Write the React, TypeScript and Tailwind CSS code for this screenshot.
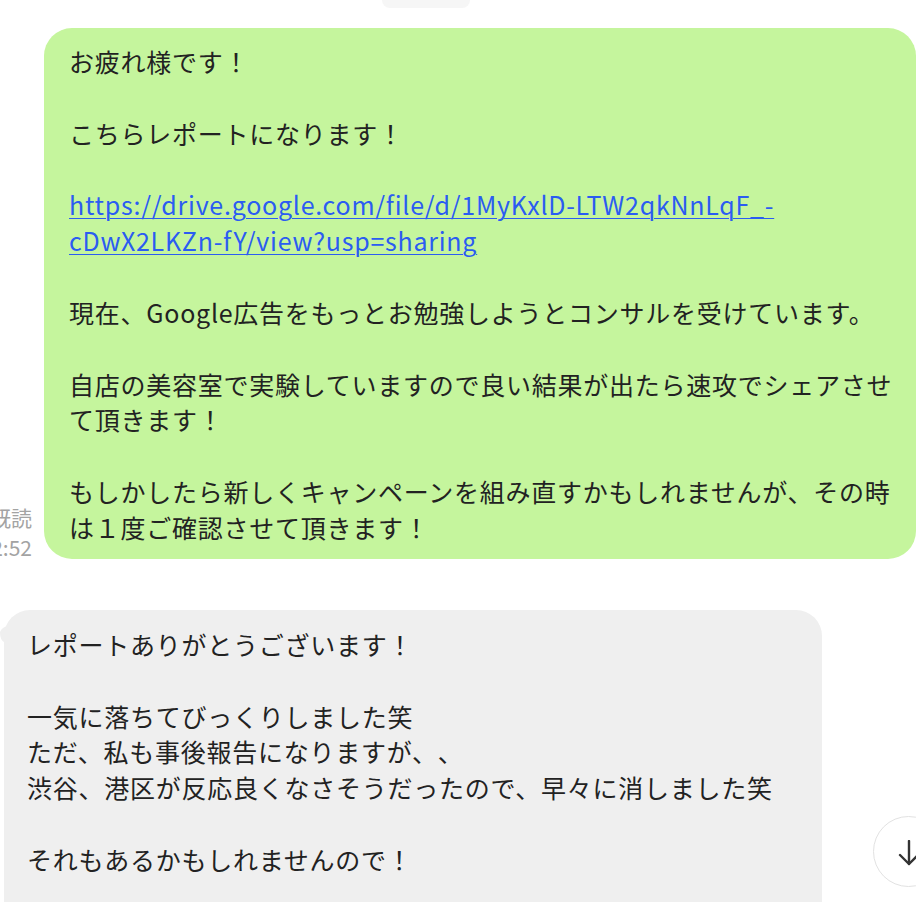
import React from "react";

const greenLines: (string | null | { link: string })[] = [
  "お疲れ様です！",
  null,
  "こちらレポートになります！",
  null,
  { link: "https://drive.google.com/file/d/1MyKxlD-LTW2qkNnLqF_-" },
  { link: "cDwX2LKZn-fY/view?usp=sharing" },
  null,
  "現在、Google広告をもっとお勉強しようとコンサルを受けています。",
  null,
  "自店の美容室で実験していますので良い結果が出たら速攻でシェアさせ",
  "て頂きます！",
  null,
  "もしかしたら新しくキャンペーンを組み直すかもしれませんが、その時",
  "は１度ご確認させて頂きます！",
];

const grayLines: (string | null)[] = [
  "レポートありがとうございます！",
  null,
  "一気に落ちてびっくりしました笑",
  "ただ、私も事後報告になりますが、、",
  "渋谷、港区が反応良くなさそうだったので、早々に消しました笑",
  null,
  "それもあるかもしれませんので！",
  null,
];

function Lines({ lines }: { lines: (string | null | { link: string })[] }) {
  return (
    <>
      {lines.map((l, i) => {
        if (l === null) return <div key={i} className="h-[35.85px]" />;
        if (typeof l === "string")
          return (
            <div key={i} className="h-[35.85px] whitespace-nowrap">
              {l}
            </div>
          );
        return (
          <div key={i} className="h-[35.85px] whitespace-nowrap">
            <a className="text-[#2b5cf2] underline decoration-1 underline-offset-[3px]" href="#">
              {l.link}
            </a>
          </div>
        );
      })}
    </>
  );
}

export default function App() {
  return (
    <div className="relative w-[916px] h-[902px] overflow-hidden bg-white font-['Noto_Sans_CJK_JP','Noto_Sans',sans-serif] text-[#222222] [text-spacing-trim:space-all]">
      <div className="ml-[382px] h-[8px] w-[88px] rounded-b-[10px] bg-[#f6f6f6]" />

      <div className="mt-[20px] flex items-end gap-[12px]">
        <div className="mb-[-3px] flex w-[32px] shrink-0 flex-col items-end text-[21px] leading-[30px] text-[#a3a3a3]">
          <div className="flex w-[32px] justify-end whitespace-nowrap">既読</div>
          <div className="flex w-[32px] justify-end whitespace-nowrap">12:52</div>
        </div>
        <div className="w-[872px] shrink-0 rounded-[28px] bg-[#c5f59d] pl-[25px] pt-[16px] pb-[13px] text-[25px] leading-[35.85px] tracking-[0.75px]">
          <Lines lines={greenLines} />
        </div>
      </div>

      <div className="relative mt-[51px] ml-[4px] w-[818px]">
        <svg className="absolute left-[-4px] top-[8px]" width="24" height="30" viewBox="0 0 24 30">
          <path d="M0 14 Q2 9 8 8 L14 8 L14 30 L4 30 L4 24 Q0 22 0 14 Z" fill="#efefef" />
        </svg>
        <div className="relative rounded-t-[26px] bg-[#efefef] pl-[23px] pt-[17px] pb-[20px] text-[25px] leading-[35.85px] tracking-[0.75px]">
          <Lines lines={grayLines} />
        </div>
      </div>

      <div className="absolute left-[873px] top-[816px] flex h-[71px] w-[71px] items-center justify-center rounded-full border border-[#e2e2e2] bg-white">
        <svg className="absolute left-[23px] top-[23px]" width="24" height="26" viewBox="0 0 24 26" fill="none" stroke="#333" strokeWidth="2.4" strokeLinecap="round" strokeLinejoin="round">
          <path d="M12 1 L12 24" />
          <path d="M3 15 L12 24 L21 15" />
        </svg>
      </div>
    </div>
  );
}
